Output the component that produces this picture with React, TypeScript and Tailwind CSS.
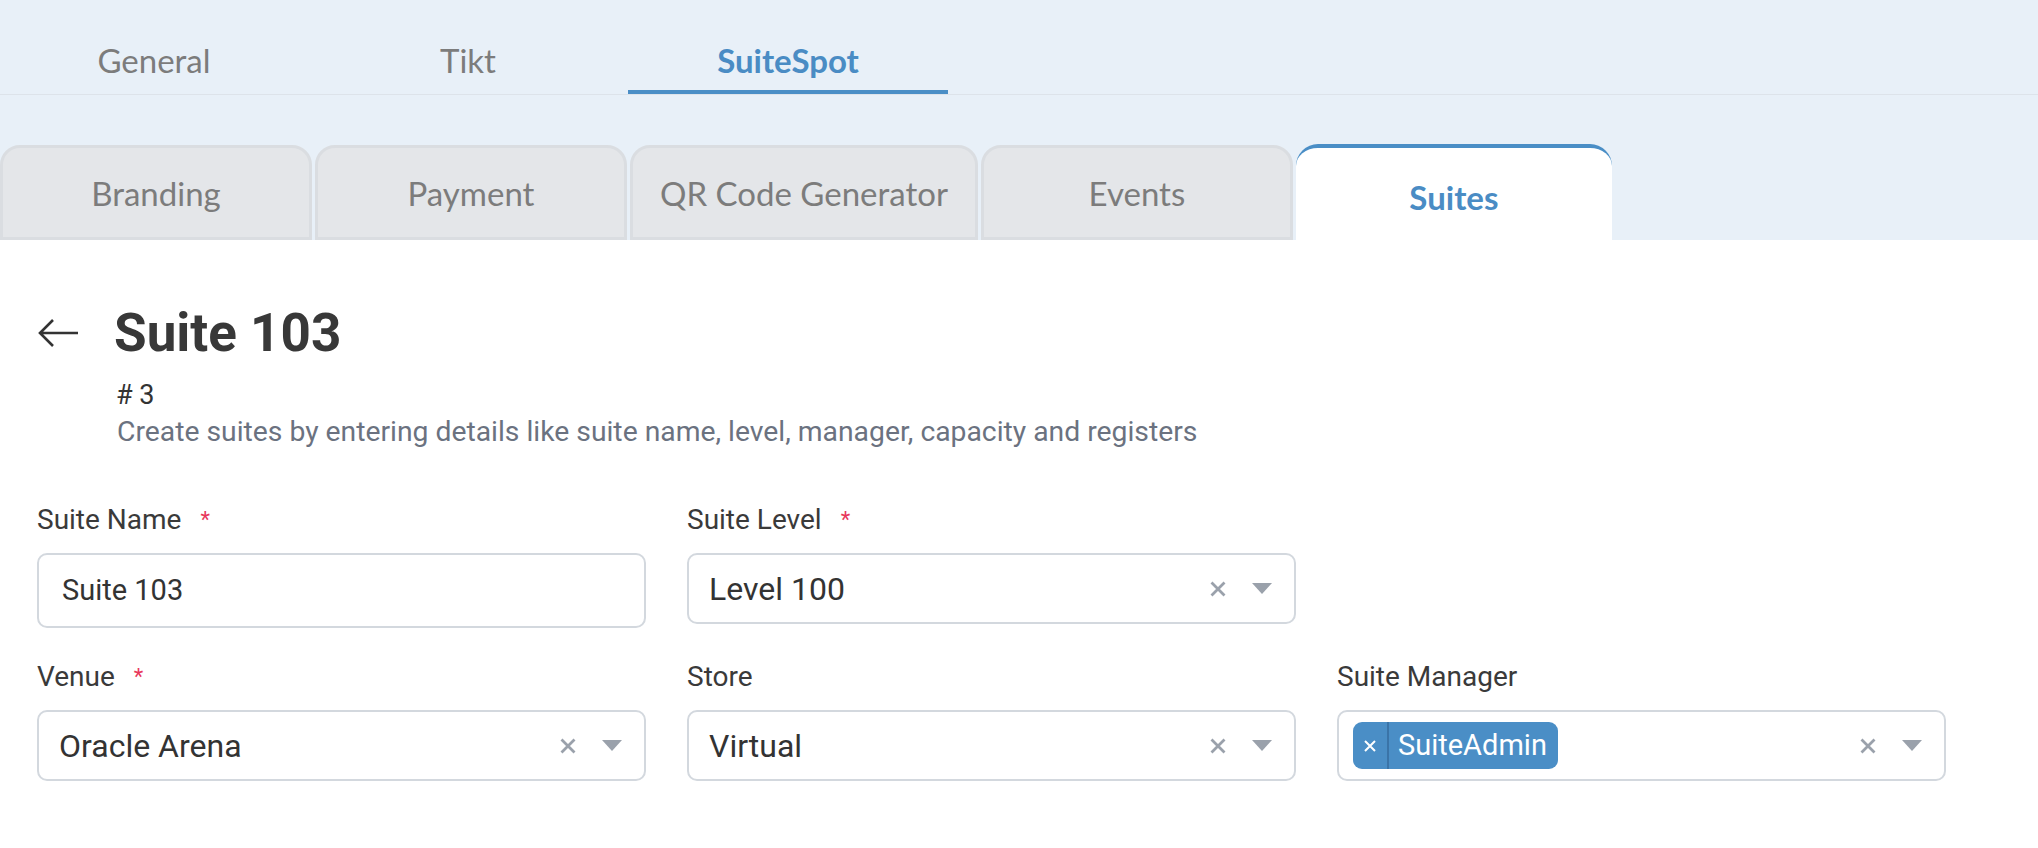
import React from "react";

const lato = "font-['Lato','Open_Sans',sans-serif]";

function ClearIcon() {
  return (
    <svg width="18" height="18" viewBox="0 0 18 18" className="shrink-0">
      <path d="M2.5 2.5 L15.5 15.5 M15.5 2.5 L2.5 15.5" stroke="#9aa1ab" strokeWidth="2.8" strokeLinecap="butt" />
    </svg>
  );
}

function Caret() {
  return (
    <svg width="20" height="11" viewBox="0 0 20 11" className="shrink-0">
      <polygon points="0,0 20,0 10,11" fill="#9aa1ab" />
    </svg>
  );
}

function Label({ text, required }: { text: string; required?: boolean }) {
  return (
    <div className="flex items-center h-[32px] mb-[17px] text-[28px] leading-[32px] text-[#3a3a3a]">
      <span>{text}</span>
      {required && <span className="ml-[19px] text-[22px] text-[#e8385c] leading-none">*</span>}
    </div>
  );
}

function SelectBox({ value, chip }: { value?: string; chip?: string }) {
  return (
    <div className="flex items-center h-[71px] rounded-[10px] border-2 border-[#d3d8de] bg-white pl-[20px] pr-[22px]">
      <div className="flex-1 flex items-center">
        {chip ? (
          <div className="flex items-stretch h-[47px] rounded-[9px] bg-[#4a8ec6] text-white -ml-[6px] overflow-hidden">
            <div className="w-[36px] flex items-center justify-center border-r-2 border-[#3a74a8]">
              <svg width="12" height="12" viewBox="0 0 12 12">
                <path d="M1 1 L11 11 M11 1 L1 11" stroke="#ffffff" strokeWidth="2" />
              </svg>
            </div>
            <div className="pl-[9px] pr-[11px] flex items-center text-[29px]">{chip}</div>
          </div>
        ) : (
          <span className="text-[32px] text-[#333333]">{value}</span>
        )}
      </div>
      <div className="flex items-center gap-[25px]">
        <ClearIcon />
        <Caret />
      </div>
    </div>
  );
}

export default function App() {
  const topTabs = [
    { t: "General", w: "w-[308px]" },
    { t: "Tikt", w: "w-[320px]" },
    { t: "SuiteSpot", w: "w-[320px]" },
  ];
  const subTabs = ["Branding", "Payment", "QR Code Generator", "Events", "Suites"];
  return (
    <div className="min-h-screen bg-white font-['Roboto',sans-serif]">
      <div className="bg-[#e8f0f8]">
        <div className="flex h-[95px] border-b border-[#dde3ea]">
          {topTabs.map(({ t, w }, i) => {
            const active = i === 2;
            return (
              <div
                key={t}
                className={`${w} h-[94px] flex items-end justify-center pb-[11px] border-b-4 ${lato} text-[33px] leading-[38px] ${
                  active ? "border-[#4a8ec6] text-[#4a8cc4] font-bold" : "border-transparent text-[#7c7c7c]"
                }`}
              >
                {t}
              </div>
            );
          })}
        </div>
        <div className="flex items-end gap-[3px] h-[96px] mt-[49px]">
          {subTabs.map((t, i) => {
            const active = i === 4;
            return active ? (
              <div
                key={t}
                className={`min-w-[316px] h-[96px] px-[27px] flex items-center justify-center pt-[7px] bg-white border-t-4 border-[#4a8ec6] rounded-t-[22px] ${lato} text-[33px] font-bold text-[#4a8cc4]`}
              >
                {t}
              </div>
            ) : (
              <div
                key={t}
                className={`min-w-[312px] h-[95px] px-[27px] flex items-center justify-center pt-[2px] bg-[#e4e6e9] border-[3px] border-[#dadde1] rounded-t-[20px] ${lato} text-[33px] text-[#7c7c7c]`}
              >
                {t}
              </div>
            );
          })}
        </div>
      </div>

      <div className="pl-[37px] pt-[63px]">
        <div className="flex items-center h-[60px]">
          <svg width="42" height="30" viewBox="0 0 42 30" className="ml-[1px]">
            <path d="M2 15 H40 M15 2 L2 15 L15 28" stroke="#333333" strokeWidth="2.6" fill="none" strokeLinejoin="miter" />
          </svg>
          <h1 className="ml-[34px] text-[53px] leading-[60px] font-bold text-[#383838]">Suite 103</h1>
        </div>
        <div className="pl-[79px] mt-[15px] text-[27px] leading-[34px] text-[#333333]"># 3</div>
        <div className="pl-[80px] mt-[3px] text-[28.3px] leading-[34px] text-[#6b7280]">
          Create suites by entering details like suite name, level, manager, capacity and registers
        </div>

        <div className="mt-[55px] grid grid-cols-[609px_609px_609px] gap-x-[41px] gap-y-[33px] items-start">
          <div>
            <Label text="Suite Name" required />
            <div className="flex items-center h-[75px] rounded-[10px] border-2 border-[#d3d8de] pl-[23px] text-[29px] text-[#333333]">
              Suite 103
            </div>
          </div>
          <div>
            <Label text="Suite Level" required />
            <SelectBox value="Level 100" />
          </div>
          <div />
          <div>
            <Label text="Venue" required />
            <SelectBox value="Oracle Arena" />
          </div>
          <div>
            <Label text="Store" />
            <SelectBox value="Virtual" />
          </div>
          <div>
            <Label text="Suite Manager" />
            <SelectBox chip="SuiteAdmin" />
          </div>
        </div>
      </div>
    </div>
  );
}
